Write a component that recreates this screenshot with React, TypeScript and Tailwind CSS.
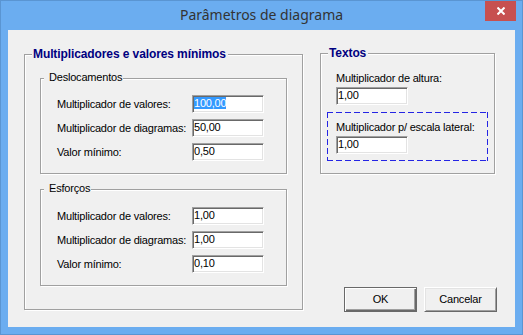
import React from 'react';

const etched = 'border border-[#a0a0a0] shadow-[1px_1px_0_#fff,inset_1px_1px_0_#fff]';

// focus rectangle: 6px dashes, 3px gaps
const focusDash =
  '[background:repeating-linear-gradient(90deg,#2424e4_0_6px,transparent_0_9px)_0_0/100%_1px_no-repeat,repeating-linear-gradient(90deg,#2424e4_0_6px,transparent_0_9px)_0_100%/100%_1px_no-repeat,repeating-linear-gradient(180deg,#2424e4_0_6px,transparent_0_9px)_0_0/1px_100%_no-repeat,repeating-linear-gradient(180deg,#2424e4_0_6px,transparent_0_9px)_100%_0/1px_100%_no-repeat]';

function Field({ value, selected }: { value: string; selected?: boolean }) {
  return (
    <div className="w-[72px] h-[18px] bg-white border border-t-[#a0a0a0] border-l-[#a0a0a0] border-r-white border-b-white shadow-[inset_1px_1px_0_#696969,inset_-1px_-1px_0_#e3e3e3] pl-[1px] pt-[1px] leading-[13px]">
      <span className={selected ? 'bg-[#3399ff] text-white' : 'text-black'}>{value}</span>
    </div>
  );
}

function Row({ label, value, selected }: { label: string; value: string; selected?: boolean }) {
  return (
    <div className="flex items-center h-[18px]">
      <span className="w-[135px] leading-[13px]">{label}</span>
      <Field value={value} selected={selected} />
    </div>
  );
}

function SubGroup({ title, rows, top }: { title: string; rows: [string, string, boolean?][]; top: string }) {
  return (
    <div className={`relative w-[247px] pl-[16px] pb-[12px] flex flex-col gap-[6px] ${top} ${etched}`}>
      <span className="absolute -top-[8px] left-[3px] pl-[5px] pr-[1px] bg-[#f0f0f0] leading-[13px]">{title}</span>
      {rows.map(([l, v, s]) => (
        <Row key={l} label={l} value={v} selected={s} />
      ))}
    </div>
  );
}

export default function App() {
  return (
    <div className="w-[523px] h-[335px] bg-[#6badf0] border border-[#5a95d2] flex flex-col font-['Liberation_Sans',Arial,sans-serif] text-[11px] tracking-[-0.2px] text-black">
      {/* Title bar */}
      <div className="h-[29px] shrink-0 grid grid-cols-[1fr_auto_1fr] items-start">
        <div />
        <div className="pt-[4px] leading-[20px] text-[14px] tracking-normal font-['Noto_Sans',sans-serif] text-[#333]">
          Parâmetros de diagrama
        </div>
        <div className="flex justify-end pr-[6px]">
          <div className="w-[31px] h-[20px] bg-[#c75050] flex items-center justify-center">
            <svg width="8" height="8" viewBox="0 0 8 8">
              <path d="M0.5 0.5L7.5 7.5M7.5 0.5L0.5 7.5" stroke="#fff" strokeWidth="2" />
            </svg>
          </div>
        </div>
      </div>

      {/* Client area */}
      <div className="mx-[7px] mb-[7px] flex-1 bg-[#f0f0f0] flex pl-[16px] pr-[18px] pb-[15px] gap-[17px]">
        <div className={`relative mt-[24px] w-[279px] h-[256px] pl-[15px] pt-[23px] ${etched}`}>
          <span className="absolute -top-[8px] left-[7px] pl-[1px] pr-[2px] bg-[#f0f0f0] leading-[14px] text-[12px] tracking-[-0.1px] font-bold text-[#000080]">
            Multiplicadores e valores mínimos
          </span>
          <SubGroup
            title="Deslocamentos"
            top="pt-[16px]"
            rows={[
              ['Multiplicador de valores:', '100,00', true],
              ['Multiplicador de diagramas:', '50,00'],
              ['Valor mínimo:', '0,50'],
            ]}
          />
          <div className="h-[15px]" />
          <SubGroup
            title="Esforços"
            top="pt-[17px]"
            rows={[
              ['Multiplicador de valores:', '1,00'],
              ['Multiplicador de diagramas:', '1,00'],
              ['Valor mínimo:', '0,10'],
            ]}
          />
        </div>

        <div className="w-[177px] flex flex-col">
          <div className={`relative mt-[23px] w-[175px] h-[121px] px-[6px] pt-[9px] ${etched}`}>
            <span className="absolute -top-[8px] left-[7px] pl-[1px] pr-[2px] bg-[#f0f0f0] leading-[14px] text-[12px] tracking-[-0.1px] font-bold text-[#000080]">
              Textos
            </span>
            <div className="h-[49px] pl-[9px] pt-[9px] flex flex-col gap-[2px]">
              <span className="leading-[13px]">Multiplicador de altura:</span>
              <Field value="1,00" />
            </div>
            <div className={`h-[49px] pl-[9px] pt-[9px] flex flex-col gap-[2px] ${focusDash}`}>
              <span className="leading-[13px]">Multiplicador p/ escala lateral:</span>
              <Field value="1,00" />
            </div>
          </div>

          <div className="mt-auto flex justify-end gap-[7px]">
            <button className="w-[73px] h-[25px] bg-[#f0f0f0] border border-[#696969] shadow-[inset_1px_1px_0_#fff,inset_-1px_-1px_0_#696969,inset_-2px_-2px_0_#a0a0a0] leading-[13px]">
              OK
            </button>
            <button className="w-[73px] h-[25px] bg-[#f0f0f0] border border-t-white border-l-white border-r-[#696969] border-b-[#696969] shadow-[inset_1px_1px_0_#e3e3e3,inset_-1px_-1px_0_#a0a0a0] leading-[13px]">
              Cancelar
            </button>
          </div>
        </div>
      </div>
    </div>
  );
}
